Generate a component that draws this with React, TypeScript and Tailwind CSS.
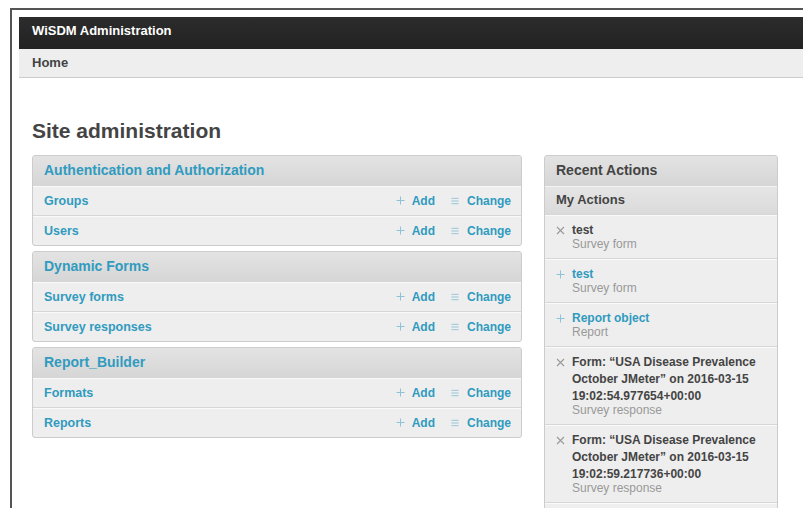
import React from "react";

type Model = { name: string };
type AppModule = { title: string; models: Model[] };

const MODULES: AppModule[] = [
  {
    title: "Authentication and Authorization",
    models: [{ name: "Groups" }, { name: "Users" }],
  },
  {
    title: "Dynamic Forms",
    models: [{ name: "Survey forms" }, { name: "Survey responses" }],
  },
  {
    title: "Report_Builder",
    models: [{ name: "Formats" }, { name: "Reports" }],
  },
];

type Action = {
  kind: "add" | "delete";
  lines: string[];
  type: string;
};

const ACTIONS: Action[] = [
  { kind: "delete", lines: ["test"], type: "Survey form" },
  { kind: "add", lines: ["test"], type: "Survey form" },
  { kind: "add", lines: ["Report object"], type: "Report" },
  {
    kind: "delete",
    lines: [
      "Form: \u201cUSA Disease Prevalence",
      "October JMeter\u201d on 2016-03-15",
      "19:02:54.977654+00:00",
    ],
    type: "Survey response",
  },
  {
    kind: "delete",
    lines: [
      "Form: \u201cUSA Disease Prevalence",
      "October JMeter\u201d on 2016-03-15",
      "19:02:59.217736+00:00",
    ],
    type: "Survey response",
  },
];

function PlusIcon({ className }: { className?: string }) {
  return (
    <svg viewBox="0 0 9 9" className={className} fill="none" stroke="currentColor" strokeWidth="1">
      <path d="M4.5 0.5v8M0.5 4.5h8" />
    </svg>
  );
}

function ChangeIcon({ className }: { className?: string }) {
  return (
    <svg viewBox="0 0 9 9" className={className} fill="none" stroke="currentColor" strokeWidth="1">
      <path d="M0.5 1.5h8M0.5 4.5h8M0.5 7.5h8" />
    </svg>
  );
}

function CrossIcon({ className }: { className?: string }) {
  return (
    <svg viewBox="0 0 9 9" className={className} fill="none" stroke="currentColor" strokeWidth="1.1">
      <path d="M1 1l7 7M8 1l-7 7" />
    </svg>
  );
}

function ModuleBox({ module }: { module: AppModule }) {
  return (
    <div className="border border-[#ccc] rounded-[3px] bg-[#eee] overflow-hidden">
      <div className="h-[29px] flex items-center px-[11px] bg-gradient-to-b from-[#e3e3e3] to-[#d6d6d6]">
        <span className="text-[14px] font-bold text-[#309bbf]">{module.title}</span>
      </div>
      {module.models.map((m) => (
        <div
          key={m.name}
          className="h-[30px] flex items-center justify-between pl-[11px] pr-[10px] border-t border-[#d6d6d6] shadow-[inset_0_1px_0_#fafafa]"
        >
          <span className="text-[12.5px] leading-[16px] pt-[1px] font-bold text-[#309bbf]">
            {m.name}
          </span>
          <div className="flex items-center text-[12px] font-bold text-[#309bbf]">
            <PlusIcon className="w-[9px] h-[9px] text-[#8cc3d8]" />
            <span className="ml-[7px]">Add</span>
            <ChangeIcon className="w-[8px] h-[8px] ml-[16px] text-[#8cc3d8]" />
            <span className="ml-[8px]">Change</span>
          </div>
        </div>
      ))}
    </div>
  );
}

function RecentActions() {
  return (
    <div className="border border-[#ccc] rounded-t-[3px] bg-[#eee] overflow-hidden">
      <div className="h-[29px] flex items-center px-[11px] bg-gradient-to-b from-[#e3e3e3] to-[#d6d6d6]">
        <span className="text-[14px] font-bold text-[#444]">Recent Actions</span>
      </div>
      <div className="h-[29px] flex items-center px-[11px] bg-gradient-to-b from-[#e6e6e6] to-[#dadada] border-t border-[#d6d6d6] shadow-[inset_0_1px_0_#f4f4f4]">
        <span className="text-[13px] font-bold text-[#444]">My Actions</span>
      </div>
      {ACTIONS.map((a, i) => (
        <div
          key={i}
          className="flex px-[11px] pt-[7px] pb-[7px] border-t border-[#d6d6d6] shadow-[inset_0_1px_0_#fafafa]"
        >
          {a.kind === "add" ? (
            <PlusIcon className="w-[9px] h-[9px] mt-[4px] shrink-0 text-[#8cc3d8]" />
          ) : (
            <CrossIcon className="w-[9px] h-[9px] mt-[4px] shrink-0 text-[#999]" />
          )}
          <div className="ml-[7px]">
            {a.lines.map((line) => (
              <div
                key={line}
                className={`text-[12px] font-bold leading-[17px] ${
                  a.kind === "add" ? "text-[#309bbf]" : "text-[#444]"
                }`}
              >
                {line}
              </div>
            ))}
            <div className="-mt-[2px] text-[12px] leading-[14px] text-[#999]">{a.type}</div>
          </div>
        </div>
      ))}
      <div className="h-[40px] border-t border-[#d6d6d6] shadow-[inset_0_1px_0_#fafafa]" />
    </div>
  );
}

export default function App() {
  return (
    <div className="w-[803px] h-[508px] bg-white overflow-hidden pt-2 pl-[10px] font-['Liberation_Sans',Arial,sans-serif]">
      <div className="h-full border-t-2 border-l-2 border-[#555] pt-[7px] pl-[7px]">
        {/* Header */}
        <div className="h-[32px] flex items-center px-[13px] pb-[4px] bg-gradient-to-b from-[#2c2c2c] to-[#222]">
          <span className="text-[13px] font-bold text-white">WiSDM Administration</span>
        </div>
        {/* Breadcrumbs */}
        <div className="h-[29px] flex items-center px-[13px] bg-[#eee] border-b border-[#ccc]">
          <span className="text-[13px] font-bold text-[#444]">Home</span>
        </div>

        <div className="pl-[13px] pt-[41px]">
          <h1 className="text-[21px] leading-[24px] font-bold text-[#444] mb-[12px]">
            Site administration
          </h1>
          <div className="flex gap-[22px] items-start">
            <div className="w-[490px] flex flex-col gap-[5px]">
              {MODULES.map((m) => (
                <ModuleBox key={m.title} module={m} />
              ))}
            </div>
            <div className="w-[234px]">
              <RecentActions />
            </div>
          </div>
        </div>
      </div>
    </div>
  );
}
